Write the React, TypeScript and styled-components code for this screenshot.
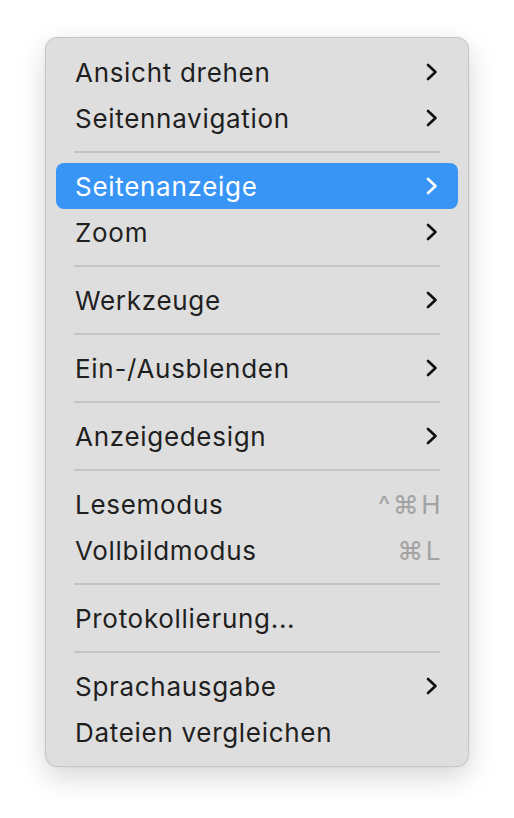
import * as React from 'react';
import styled, { createGlobalStyle } from 'styled-components';

const GlobalStyle = createGlobalStyle`
	html, body {
		margin: 0;
		padding: 0;
		background: #ffffff;
	}
	body {
		font-family: Inter, 'Liberation Sans', sans-serif;
		-webkit-font-smoothing: antialiased;
	}
`;

const Page = styled.div`
	padding: 37px 0 0 45px;
	height: 818px;
	box-sizing: border-box;
`;

const Panel = styled.nav`
	width: 424px;
	box-sizing: border-box;
	padding: 11px 10px;
	background: #dedede;
	border: 1px solid #c6c6c6;
	border-radius: 12px;
	box-shadow: 0 10px 28px rgba(0, 0, 0, 0.16), 0 0 2px rgba(0, 0, 0, 0.08);
	display: flex;
	flex-direction: column;
`;

const Row = styled.div<{ $active?: boolean }>`
	height: 46px;
	display: flex;
	align-items: center;
	justify-content: space-between;
	padding: 0 19px 0 19px;
	border-radius: 8px;
	font-size: 26px;
	letter-spacing: 0.7px;
	color: ${(p) => (p.$active ? '#ffffff' : '#1f1f1f')};
	background: ${(p) => (p.$active ? '#3895f6' : 'transparent')};
`;

const Label = styled.span`
	white-space: nowrap;
`;

const Shortcut = styled.span`
	color: #a3a3a3;
	font-size: 26px;
	letter-spacing: 2.5px;
	margin-right: -4px;
`;

const Separator = styled.div`
	height: 22px;
	display: flex;
	align-items: center;
	padding: 0 18px 0 18px;
	&::after {
		content: '';
		flex: 1;
		height: 2px;
		background: #c3c3c3;
	}
`;

function Chevron({ color }: { color: string }) {
	return (
		<svg width="12" height="18" viewBox="0 0 12 18" style={{ marginRight: 1 }}>
			<path d="M2 2 L9.5 9 L2 16" fill="none" stroke={color} strokeWidth="2.6" strokeLinecap="round" strokeLinejoin="round" />
		</svg>
	);
}

type Item = { label: string; sub?: boolean; active?: boolean; shortcut?: string } | 'sep';

const items: Item[] = [
	{ label: 'Ansicht drehen', sub: true },
	{ label: 'Seitennavigation', sub: true },
	'sep',
	{ label: 'Seitenanzeige', sub: true, active: true },
	{ label: 'Zoom', sub: true },
	'sep',
	{ label: 'Werkzeuge', sub: true },
	'sep',
	{ label: 'Ein-/Ausblenden', sub: true },
	'sep',
	{ label: 'Anzeigedesign', sub: true },
	'sep',
	{ label: 'Lesemodus', shortcut: '^⌘H' },
	{ label: 'Vollbildmodus', shortcut: '⌘L' },
	'sep',
	{ label: 'Protokollierung...' },
	'sep',
	{ label: 'Sprachausgabe', sub: true },
	{ label: 'Dateien vergleichen' },
];

export default function App(): JSX.Element {
	return (
		<Page>
			<GlobalStyle />
			<Panel>
				{items.map((item, i) =>
					item === 'sep' ? (
						<Separator key={i} />
					) : (
						<Row key={i} $active={item.active}>
							<Label>{item.label}</Label>
							{item.sub && <Chevron color={item.active ? '#ffffff' : '#111111'} />}
							{item.shortcut && <Shortcut>{item.shortcut}</Shortcut>}
						</Row>
					)
				)}
			</Panel>
		</Page>
	);
}
